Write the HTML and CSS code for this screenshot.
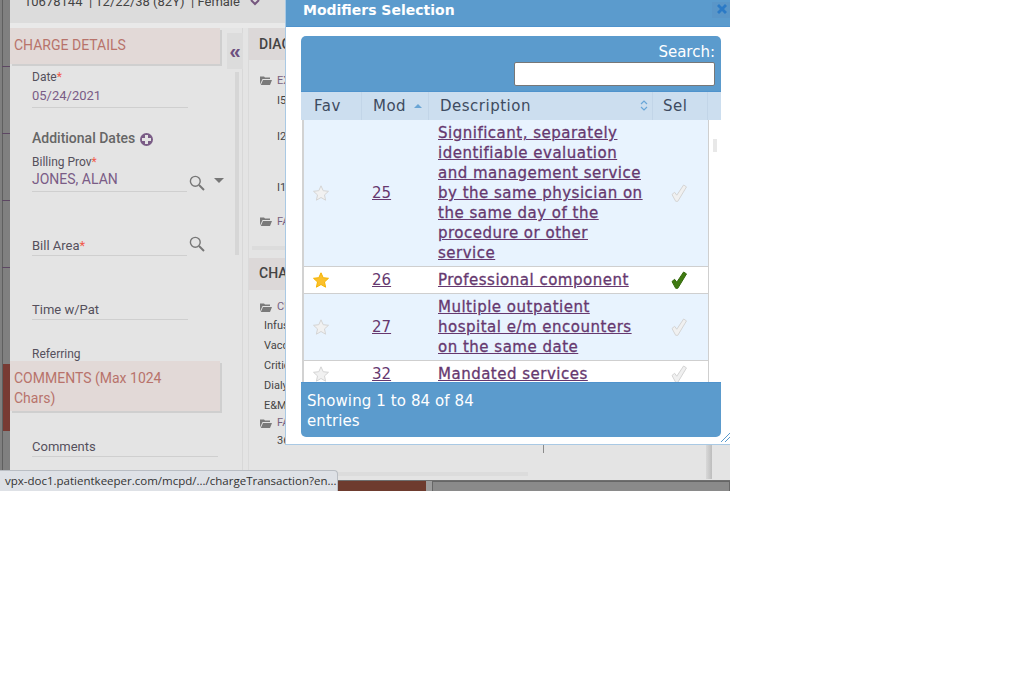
FILE: index.html
```html
<!DOCTYPE html>
<html lang="en">
<head>
    <meta charset="UTF-8">
    <title>Modifiers Selection</title>
    <link rel="stylesheet" href="styles.css">
</head>
<body>

<svg class="icon-defs" width="0" height="0">
    <symbol id="star" viewBox="0 0 16 16"><path d="M8 .8l2.2 4.9 5.3.6-4 3.6 1.1 5.3L8 12.5l-4.6 2.7 1.1-5.3-4-3.6 5.3-.6z"/></symbol>
    <symbol id="tick" viewBox="0 0 16 18"><path d="M1 10.5l2.6-2.2 2.2 2.9L12.6 1l2.9 1.9-8.7 14.4H4.7z"/></symbol>
    <symbol id="search" viewBox="0 0 16 16"><circle cx="6.3" cy="6.3" r="4.9" fill="none" stroke="#777" stroke-width="1.4"/><path d="M10 10l5 5" stroke="#777" stroke-width="2" fill="none"/></symbol>
    <symbol id="folder" viewBox="0 0 12 10"><path d="M0 1.5h4l1 1h5v1.5H2.5L0 9.5z M3 5h9l-2 5H.8z" fill="#7a7a7a"/></symbol>
</svg>

<div class="shot">
    <div class="rail">
        <i class="tick"></i><i class="tick"></i><i class="tick"></i><i class="tick"></i>
        <i class="rail-red"></i>
    </div>

    <div class="page">
        <div class="patient">
            <span>10678144 &nbsp;| 12/22/38 (82Y) &nbsp;| Female</span>
            <svg class="chevron" width="10" height="6" viewBox="0 0 10 6"><path d="M1 0l4 4 4-4" fill="none" stroke="#76577f" stroke-width="2"/></svg>
        </div>

        <div class="panels">
            <div class="charge">
                <div class="section-head">CHARGE DETAILS</div>
                <button class="collapse">«</button>
                <div class="charge-scroll"></div>

                <div class="field field-date">
                    <label>Date<em>*</em></label>
                    <div class="value">05/24/2021</div>
                </div>
                <div class="add-dates">Additional Dates <span class="plus"></span></div>
                <div class="field field-prov">
                    <label>Billing Prov<em>*</em></label>
                    <div class="value">JONES, ALAN</div>
                    <svg class="look"><use href="#search"/></svg>
                    <i class="caret"></i>
                </div>
                <div class="field field-area">
                    <div class="value">Bill Area<em>*</em></div>
                    <svg class="look"><use href="#search"/></svg>
                </div>
                <div class="field field-time">
                    <div class="value">Time w/Pat</div>
                </div>
                <div class="referring">Referring</div>
                <div class="section-head section-comments">COMMENTS (Max 1024 Chars)</div>
                <div class="field field-comments">
                    <div class="value">Comments</div>
                </div>
            </div>

            <div class="middle">
                <div class="mid-head">DIAGNOSES</div>
                <div class="tree tree-diag">
                    <div class="branch"><svg class="folder"><use href="#folder"/></svg>EXISTING</div>
                    <div class="code code-1">I50.9</div>
                    <div class="code code-2">I25.10</div>
                    <div class="code code-3">I10</div>
                    <div class="branch branch-fav"><svg class="folder"><use href="#folder"/></svg>FAVORITES</div>
                    <div class="tree-scroll"></div>
                </div>
                <div class="mid-head mid-head-charges">CHARGES</div>
                <div class="tree tree-charges">
                    <div class="branch"><svg class="folder"><use href="#folder"/></svg>CURRENT</div>
                    <div class="item">Infusion</div>
                    <div class="item">Vaccine</div>
                    <div class="item">Critical Care</div>
                    <div class="item">Dialysis</div>
                    <div class="item">E&amp;M</div>
                    <div class="branch branch-second"><svg class="folder"><use href="#folder"/></svg>FAVORITES</div>
                    <div class="code">36415</div>
                </div>
                <div class="mid-scroll"></div>
                <div class="mid-divider"></div>
            </div>
        </div>

        <div class="strip">
            <div class="strip-red"></div>
            <div class="strip-gap"></div>
            <div class="strip-box"></div>
        </div>
    </div>

    <div class="modal">
        <div class="modal-title">
            <span>Modifiers Selection</span>
            <button class="modal-close"><svg width="12" height="12" viewBox="0 0 12 12"><path d="M1 3l2-2 3 3 3-3 2 2-3 3 3 3-2 2-3-3-3 3-2-2 3-3z"/></svg></button>
        </div>
        <div class="modal-body">
            <div class="grid-box">
                <div class="grid-top">
                    <label for="search">Search:</label>
                    <input id="search" type="text">
                </div>
                <div class="grid-head">
                    <div class="th th-fav">Fav</div>
                    <div class="th th-mod">Mod <i class="sort-up"></i></div>
                    <div class="th th-desc">Description
                        <svg class="sort-both" width="8" height="11" viewBox="0 0 8 11"><path d="M1 4l3-3 3 3M1 7l3 3 3-3" fill="none" stroke="#69a6d8" stroke-width="1.2"/></svg>
                    </div>
                    <div class="th th-sel">Sel</div>
                    <div class="th th-end"></div>
                </div>
                <div class="grid-scroll">
                    <table class="mods">
                        <tr class="odd">
                            <td class="c-fav"><svg class="star"><use href="#star"/></svg></td>
                            <td class="c-mod"><a href="#">25</a></td>
                            <td class="c-desc"><a href="#">Significant, separately identifiable evaluation and management service by the same physician on the same day of the procedure or other service</a></td>
                            <td class="c-sel"><svg class="tick-mark"><use href="#tick"/></svg></td>
                        </tr>
                        <tr>
                            <td class="c-fav"><svg class="star on"><use href="#star"/></svg></td>
                            <td class="c-mod"><a href="#">26</a></td>
                            <td class="c-desc"><a href="#">Professional component</a></td>
                            <td class="c-sel"><svg class="tick-mark on"><use href="#tick"/></svg></td>
                        </tr>
                        <tr class="odd">
                            <td class="c-fav"><svg class="star"><use href="#star"/></svg></td>
                            <td class="c-mod"><a href="#">27</a></td>
                            <td class="c-desc"><a href="#">Multiple outpatient hospital e/m encounters on the same date</a></td>
                            <td class="c-sel"><svg class="tick-mark"><use href="#tick"/></svg></td>
                        </tr>
                        <tr>
                            <td class="c-fav"><svg class="star"><use href="#star"/></svg></td>
                            <td class="c-mod"><a href="#">32</a></td>
                            <td class="c-desc"><a href="#">Mandated services</a></td>
                            <td class="c-sel"><svg class="tick-mark"><use href="#tick"/></svg></td>
                        </tr>
                    </table>
                    <div class="thumb"></div>
                </div>
                <div class="grid-foot">Showing 1 to 84 of 84 entries</div>
            </div>
        </div>
        <svg class="grip" width="9" height="9" viewBox="0 0 9 9"><path d="M0 9l9-9M4 9l5-5" stroke="#5b9bcd" fill="none"/></svg>
    </div>

    <div class="status-url">vpx-doc1.patientkeeper.com/mcpd/.../chargeTransaction?en...</div>
</div>

</body>
</html>
```

FILE: styles.css
```css
body {
    margin: 0;
    background: #fff;
    font-family: "Roboto", sans-serif;
}

.icon-defs {
    position: absolute;
}

.shot {
    position: relative;
    width: 730px;
    height: 491px;
    overflow: hidden;
    display: flex;
    background: #e4e4e4;
}

/* dimmed page behind the dialog */
.rail {
    position: relative;
    flex: 0 0 10px;
    box-sizing: border-box;
    border-left: 2px solid #7f7f7f;
    background: #808080;
    box-shadow: inset 1px 0 0 #5f5f5f;
}

.tick {
    display: block;
    height: 1px;
    margin-top: 66px;
    background: #5d4763;
}

.rail-red {
    position: absolute;
    left: 1px;
    top: 364px;
    width: 7px;
    height: 67px;
    background: #783a33;
}

.page {
    flex: 1;
    min-width: 0;
    display: flex;
    flex-direction: column;
}

.patient {
    flex: 0 0 23px;
    display: flex;
    gap: 10px;
    padding-left: 14px;
    background: #dcdcdc;
    color: #444;
    font-size: 13px;
    line-height: 16px;
    overflow: hidden;
}

.patient span {
    margin-top: -6px;
}

.panels {
    flex: 1;
    display: flex;
    min-height: 0;
    padding-top: 5px;
    background: linear-gradient(#e9e9e9 5px, #e4e4e4 5px);
}

.charge {
    position: relative;
    flex: 0 0 233px;
    border-right: 1px solid #d8d8d8;
    box-sizing: border-box;
}

.section-head {
    width: 206px;
    height: 36px;
    padding-left: 4px;
    background: #e2d9d7;
    box-shadow: 2px 2px 0 #cfcfcf;
    color: #b8736b;
    font-size: 14px;
    line-height: 34px;
}

.section-comments {
    box-sizing: border-box;
    width: 210px;
    height: 50px;
    margin-top: -2px;
    padding: 7px 50px 0 4px;
    line-height: 20px;
}

.collapse {
    position: absolute;
    left: 217px;
    top: 5px;
    width: 16px;
    height: 36px;
    padding: 0;
    border: 0;
    background: #dcdcdc;
    color: #6d5080;
    font-size: 20px;
    font-weight: 700;
    line-height: 30px;
}

.charge-scroll {
    position: absolute;
    left: 225px;
    top: 44px;
    width: 4px;
    height: 183px;
    background: #d6d6d6;
}

.field {
    position: relative;
    margin-left: 22px;
    font-size: 12px;
    color: #55505c;
}

.field label {
    display: block;
    height: 16px;
    line-height: 16px;
}

.field em {
    color: #f15a4a;
    font-style: normal;
}

.field .value {
    height: 19px;
    border-bottom: 1px solid #cfcfcf;
    font-size: 13px;
    line-height: 20px;
    color: #55505c;
}

.field-date {
    width: 156px;
    margin-top: 5px;
}

.field-date .value {
    height: 22px;
    line-height: 22px;
    color: #7a5c86;
}

.add-dates {
    display: flex;
    align-items: center;
    gap: 5px;
    margin: 21px 0 0 22px;
    height: 18px;
    color: #666;
    font-size: 14px;
    font-weight: 500;
}

.plus {
    position: relative;
    width: 13px;
    height: 13px;
    margin-top: 2px;
    border-radius: 50%;
    background: #7a5c86;
}

.plus::before,
.plus::after {
    content: "";
    position: absolute;
    background: #e4e4e4;
}

.plus::before {
    left: 2px;
    top: 5px;
    width: 9px;
    height: 3px;
}

.plus::after {
    left: 5px;
    top: 2px;
    width: 3px;
    height: 9px;
}

.field-prov {
    width: 155px;
    margin-top: 7px;
}

.field-prov .value {
    height: 21px;
    font-size: 14px;
    line-height: 19px;
    color: #7a5c86;
}

.look {
    position: absolute;
    left: 157px;
    top: 21px;
    width: 16px;
    height: 16px;
}

.caret {
    position: absolute;
    left: 182px;
    top: 24px;
    border: 5px solid transparent;
    border-top: 5px solid #777;
    border-bottom: 0;
}

.field-area {
    width: 155px;
    margin-top: 44px;
}

.field-area .look {
    top: 0;
}

.field-time {
    width: 156px;
    margin-top: 44px;
}

.referring {
    margin: 25px 0 0 22px;
    height: 18px;
    color: #55505c;
    font-size: 12px;
    line-height: 18px;
}

.field-comments {
    width: 186px;
    margin-top: 26px;
}

.middle {
    position: relative;
    flex: 1;
    min-width: 0;
    margin-left: 5px;
    border-left: 1px solid #dadada;
    color: #444;
}

.mid-head {
    height: 32px;
    padding-left: 10px;
    background: #dcd8d8;
    font-size: 14px;
    font-weight: 500;
    line-height: 32px;
}

.mid-head-charges {
    line-height: 30px;
}

.tree {
    font-size: 11px;
}

.tree-diag {
    position: relative;
    height: 198px;
    padding-top: 12px;
    box-sizing: border-box;
}

.branch {
    display: flex;
    align-items: center;
    gap: 5px;
    height: 16px;
    padding-left: 11px;
    color: #77617f;
    white-space: nowrap;
}

.folder {
    width: 12px;
    height: 10px;
}

.code {
    padding-left: 28px;
    height: 16px;
    line-height: 16px;
}

.code-1 {
    margin-top: 5px;
}

.code-2 {
    margin-top: 20px;
}

.code-3 {
    margin-top: 35px;
}

.branch-fav {
    margin-top: 17px;
}

.tree-scroll {
    position: absolute;
    left: 3px;
    top: 186px;
    width: 260px;
    height: 4px;
    background: #dcdcdc;
}

.tree-charges {
    padding-top: 9px;
}

.tree-charges .branch {
    height: 15px;
}

.tree-charges .branch-second {
    margin-top: 1px;
}

.item {
    height: 20px;
    padding-left: 15px;
    line-height: 24px;
}

.tree-charges .code {
    margin-top: 3px;
}

.mid-scroll {
    position: absolute;
    left: 2px;
    top: 444px;
    width: 277px;
    height: 4px;
    background: #dcdcdc;
}

.mid-scroll::after {
    content: "";
    position: absolute;
    left: 455px;
    top: -27px;
    width: 6px;
    height: 34px;
    background: linear-gradient(90deg, #d8d8d8, #bdbdbd);
}

.mid-divider {
    position: absolute;
    left: 294px;
    top: 417px;
    width: 1px;
    height: 8px;
    background: #8a8a8a;
}

.strip {
    flex: 0 0 11px;
    display: flex;
    border-top: 1px solid #6f6f6f;
    box-sizing: border-box;
    background: #8a8a8a;
}

.strip-red {
    flex: 0 0 416px;
    background: #6e3b2e;
}

.strip-gap {
    flex: 0 0 6px;
    background: #9c9c9c;
}

.strip-box {
    flex: 1;
    border: 1px solid #666;
    border-bottom: 0;
    background: #8a8a8a;
}

/* dialog */
.modal {
    position: absolute;
    left: 285px;
    top: 0;
    width: 445px;
    height: 445px;
    box-sizing: border-box;
    display: flex;
    flex-direction: column;
    border-left: 1px solid #a9c9e4;
    border-bottom: 1px solid #a9c9e4;
    background: #fff;
    font-family: "DejaVu Sans", sans-serif;
    font-size: 15px;
}

.modal-title {
    flex: 0 0 27px;
    display: flex;
    justify-content: space-between;
    box-sizing: border-box;
    padding-left: 17px;
    border-bottom: 1px solid #4f93cd;
    background: #5b9bcd;
    color: #fff;
    font-size: 14px;
    font-weight: 700;
    line-height: 20px;
}

.modal-close {
    width: 18px;
    height: 16px;
    margin-top: 2px;
    padding: 0 0 0 1px;
    border: 0;
    background: #5a96c8;
    fill: #2b7ac6;
}

.modal-body {
    flex: 1;
    padding: 9px 9px 7px 15px;
    min-height: 0;
}

.grid-box {
    display: flex;
    flex-direction: column;
    height: 401px;
    box-sizing: border-box;
    border-radius: 5px;
    overflow: hidden;
}

.grid-top {
    flex: 0 0 56px;
    display: flex;
    flex-direction: column;
    align-items: flex-end;
    box-sizing: border-box;
    padding: 7px 6px 0 0;
    background: #5b9bcd;
    border-bottom: 1px solid #4f93cd;
    color: #fff;
    line-height: 19px;
}

.grid-top input {
    box-sizing: border-box;
    width: 201px;
    height: 24px;
    border: 1px solid #777;
    border-radius: 2px;
}

.grid-head {
    flex: 0 0 28px;
    display: flex;
    background: #ccdeef;
    color: #3e4b60;
    letter-spacing: .5px;
    line-height: 28px;
}

.th {
    position: relative;
    box-sizing: border-box;
    border-right: 1px solid #c2d5e8;
}

.th-fav {
    flex: 0 0 61px;
    padding-left: 13px;
}

.th-mod {
    flex: 0 0 67px;
    padding-left: 11px;
}

.th-desc {
    flex: 0 0 224px;
    padding-left: 11px;
}

.th-sel {
    flex: 0 0 55px;
    padding-left: 10px;
}

.th-end {
    flex: 1;
    border-right: 0;
}

.sort-up {
    position: absolute;
    left: 52px;
    top: 12px;
    border: 4px solid transparent;
    border-bottom: 4px solid #6aa5d5;
    border-top: 0;
}

.sort-both {
    position: absolute;
    left: 211px;
    top: 8px;
}

.grid-scroll {
    position: relative;
    flex: 1;
    min-height: 0;
    overflow: hidden;
    padding-left: 1px;
}

.mods {
    width: 407px;
    table-layout: fixed;
    border-collapse: collapse;
    border-left: 2px solid #d2d2d2;
    border-right: 1px solid #cfcfcf;
    line-height: 20px;
}

.mods tr {
    background: #fff;
    border-bottom: 1px solid #cfcfcf;
}

.mods tr.odd {
    background: #e8f3fe;
}

.mods td {
    padding: 3px 0;
    vertical-align: middle;
}

.mods a {
    color: #66386f;
}

.c-fav {
    width: 59px;
    padding-left: 10px !important;
    box-sizing: border-box;
}

.c-mod {
    width: 67px;
    padding-left: 10px !important;
    box-sizing: border-box;
}

.c-desc {
    width: 224px;
    padding-left: 9px !important;
    padding-right: 4px !important;
    box-sizing: border-box;
    letter-spacing: .5px;
    -webkit-text-stroke: .3px #66386f;
}

.c-sel {
    text-align: left;
    padding-left: 18px !important;
    box-sizing: border-box;
}

.star {
    display: block;
    width: 16px;
    height: 16px;
    margin: 0 0 0 -1px;
    fill: #f1f1f1;
    stroke: #d4d4d4;
}

.star.on {
    fill: #fbc02d;
    stroke: #f5b400;
}

.tick-mark {
    display: block;
    width: 16px;
    height: 18px;
    fill: #f0f0f0;
    stroke: #d4d4d4;
}

.tick-mark.on {
    fill: #3f7a12;
    stroke: #356a0d;
}

.thumb {
    position: absolute;
    left: 412px;
    top: 19px;
    width: 4px;
    height: 13px;
    background: #e8e8e8;
}

.grid-foot {
    flex: 0 0 55px;
    box-sizing: border-box;
    width: 100%;
    padding: 8px 240px 0 6px;
    background: #5b9bcd;
    border-top: 1px solid #4f93cd;
    color: #fff;
    letter-spacing: .1px;
    line-height: 20px;
}

.grip {
    position: absolute;
    right: 0;
    bottom: 2px;
}

.status-url {
    position: absolute;
    left: 0;
    bottom: 0;
    width: 338px;
    height: 21px;
    box-sizing: border-box;
    padding-left: 5px;
    border: 1px solid #b9bdc3;
    border-left: 0;
    border-bottom: 0;
    border-top-right-radius: 4px;
    background: #dee1e6;
    color: #333;
    font-family: "Open Sans", sans-serif;
    font-size: 11.5px;
    line-height: 20px;
    white-space: nowrap;
}
```
